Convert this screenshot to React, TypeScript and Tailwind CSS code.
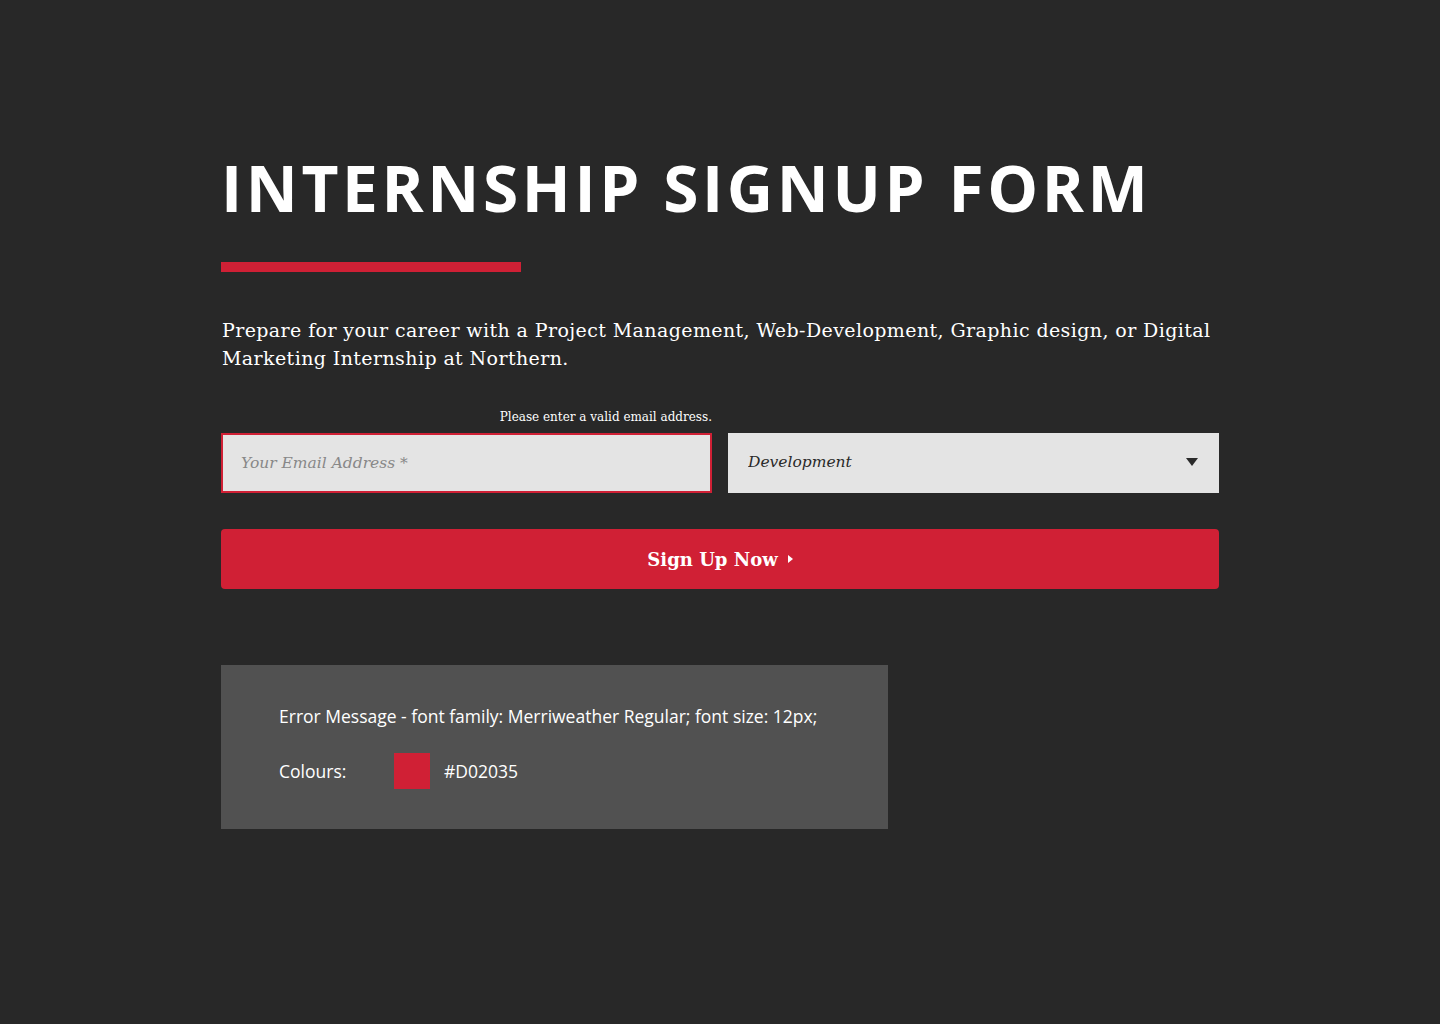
import React, { useState } from 'react';

export default function App() {
  const [email, setEmail] = useState<string>('');
  const [area, setArea] = useState<string>('Development');

  const handleSubmit = (e: React.FormEvent<HTMLFormElement>) => {
    e.preventDefault();
  };

  return (
    <div className="min-h-[1024px] w-full bg-[#282828]">
      <div className="mx-auto w-[998px] pt-[150px]">
        {/* heading */}
        <h1 className="font-['Open_Sans',sans-serif] text-[64px] font-bold leading-[76px] tracking-[3.6px] text-white">
          INTERNSHIP SIGNUP FORM
        </h1>
        <div className="mt-[36px] h-[10px] w-[300px] bg-[#D02035]"></div>

        <p className="mt-[44px] pl-[1px] font-['DejaVu_Serif',serif] text-[19px] leading-[28px] tracking-[0.4px] text-white">
          Prepare for your career with a Project Management, Web-Development, Graphic design, or Digital
          <br />
          Marketing Internship at Northern.
        </p>

        {/* form */}
        <form className="mt-[37px]" onSubmit={handleSubmit}>
          <div className="flex gap-[16px]">
            <div className="flex w-[491px] flex-col">
              <p className="mb-[7px] text-right font-['DejaVu_Serif',serif] text-[12px] leading-[17px] text-white">
                Please enter a valid email address.
              </p>
              <input
                className="h-[60px] w-full border-2 border-[#D02035] bg-[#e4e4e4] px-[18px] font-['DejaVu_Serif',serif] text-[15.5px] italic text-[#333] placeholder:text-[#888] focus:outline-none"
                type="email"
                placeholder="Your Email Address *"
                value={email}
                onChange={(e) => setEmail(e.target.value)}
              />
            </div>
            <div className="flex w-[491px] flex-col justify-end">
              <div className="relative h-[60px] w-full bg-[#e4e4e4]">
                <select
                  className="h-full w-full appearance-none bg-transparent px-[20px] font-['DejaVu_Serif',serif] text-[15.5px] italic text-[#2a2a2a] focus:outline-none"
                  value={area}
                  onChange={(e) => setArea(e.target.value)}
                >
                  <option>Development</option>
                  <option>Project Management</option>
                  <option>Graphic Design</option>
                  <option>Digital Marketing</option>
                </select>
                <svg
                  className="pointer-events-none absolute right-[21px] top-[25px]"
                  width="12"
                  height="8"
                  viewBox="0 0 12 8"
                >
                  <path d="M0 0 L12 0 L6 8 Z" fill="#2a2a2a" />
                </svg>
              </div>
            </div>
          </div>

          <button
            type="submit"
            className="mt-[36px] flex h-[60px] w-full items-center justify-center gap-[10px] rounded-[4px] bg-[#D02035] font-['DejaVu_Serif',serif] text-[18px] font-bold text-white"
          >
            Sign Up Now
            <svg width="5" height="8" viewBox="0 0 5 8">
              <path d="M0 0 L5 4 L0 8 Z" fill="#fff" />
            </svg>
          </button>
        </form>

        {/* notes box */}
        <div className="mt-[76px] w-[667px] bg-[#515151] px-[58px] pb-[40px] pt-[39px] font-['Open_Sans',sans-serif] text-[17.5px] text-white">
          <p className="leading-[24px]">Error Message - font family: Merriweather Regular; font size: 12px;</p>
          <div className="mt-[25px] flex items-center">
            <span className="w-[115px]">Colours:</span>
            <span className="h-[36px] w-[36px] bg-[#D02035]"></span>
            <span className="ml-[14px]">#D02035</span>
          </div>
        </div>
      </div>
    </div>
  );
}
